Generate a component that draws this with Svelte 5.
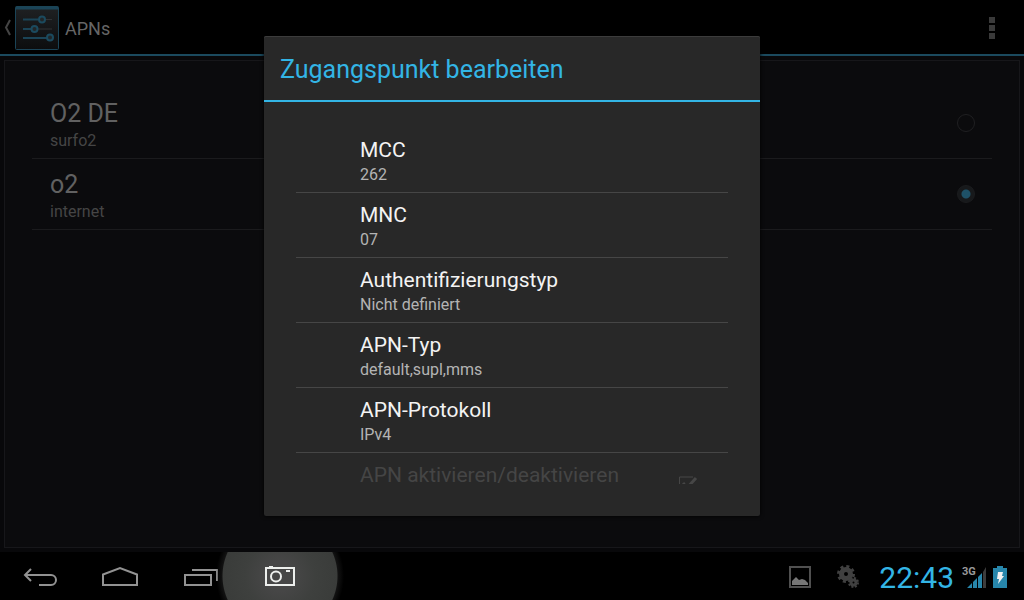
<script>
  const networks = [
    { name: 'O2 DE', apn: 'surfo2' },
    { name: 'o2', apn: 'internet' },
  ];
  let selected = $state('internet');

  const settings = [
    { label: 'MCC', value: '262' },
    { label: 'MNC', value: '07' },
    { label: 'Authentifizierungstyp', value: 'Nicht definiert' },
    { label: 'APN-Typ', value: 'default,supl,mms' },
    { label: 'APN-Protokoll', value: 'IPv4' },
  ];
</script>

<div class="screen">
  <header class="actionbar">
    <button class="up" aria-label="Zurück zu Einstellungen">
      <svg width="60" height="44" viewBox="0 0 60 44" fill="none">
        <defs>
          <linearGradient id="face" x1="0" y1="0" x2="0" y2="1">
            <stop offset="0" stop-color="#1f2123" />
            <stop offset="1" stop-color="#0c0d0e" />
          </linearGradient>
        </defs>
        <path d="M10 14 6 21.500 10 29" stroke="#444" stroke-width="2" />
        <rect x="15.500" y=".500" width="43" height="43" rx="1" fill="url(#face)" stroke="#1b4457" />
        <path d="M16 2h42" stroke="#1b4457" stroke-width="3" />
        <path d="M45 13.500h7M38 23h14" stroke="#303234" />
        <path d="M23 13.500h15M23 23h8M23 32h24" stroke="#1b4457" stroke-width="2" />
        <g stroke="#1b4a5e" stroke-width="2" fill="#222628">
          <circle cx="42" cy="13.500" r="3" />
          <circle cx="34.500" cy="23" r="3" />
          <circle cx="50" cy="31.500" r="3" />
        </g>
      </svg>
    </button>
    <h1>APNs</h1>
    <button class="overflow" aria-label="Weitere Optionen">
      <svg width="6" height="22" viewBox="0 0 6 22" fill="#3a3a3a">
        <path d="M0 0h6v6H0zM0 8h6v6H0zM0 16h6v6H0z" />
      </svg>
    </button>
  </header>

  <main>
    <div class="panel">
      {#each networks as network}
        <label class="network">
          <span class="texts">
            <span class="name">{network.name}</span>
            <span class="apn">{network.apn}</span>
          </span>
          <input type="radio" name="apn" value={network.apn} bind:group={selected} />
        </label>
      {/each}
    </div>
  </main>

  <nav>
    <button class="key" aria-label="Zurück">
      <svg width="36" height="24" viewBox="0 0 36 24" fill="none" stroke="#929292" stroke-width="2">
        <path d="M9 5 3 11l6 6M3 11h26a5 5 0 0 1 0 10H17" />
      </svg>
    </button>
    <button class="key" aria-label="Startseite">
      <svg width="38" height="24" viewBox="0 0 38 24" fill="none" stroke="#929292" stroke-width="2">
        <path d="M2 21V10.500L19 4l17 6.500V21z" />
      </svg>
    </button>
    <button class="key" aria-label="Letzte Apps">
      <svg width="38" height="24" viewBox="0 0 38 24" fill="none" stroke="#929292" stroke-width="2">
        <path d="M4 11h26v10H4zM11 6h25v11" />
      </svg>
    </button>
    <button class="key pressed" aria-label="Screenshot aufnehmen">
      <svg width="30" height="20" viewBox="0 0 30 20" fill="none" stroke="#eceeec" stroke-width="2">
        <path d="M1 2h28v17H1zM4 .500h4M21 5h4" />
        <circle cx="11" cy="10.500" r="5" />
      </svg>
    </button>
    <div class="status">
      <svg class="picture" width="22" height="22" viewBox="0 0 22 22">
        <path d="M1 1h20v20H1z" fill="none" stroke="#505050" stroke-width="2" />
        <path d="M3 19v-4l4-4 3 3 3-1 3 1 3 3v2z" fill="#777" />
      </svg>
      <svg class="gears" width="22" height="24" viewBox="0 0 22 24" fill="none" stroke="#404040">
        <circle cx="9" cy="9" r="4.500" stroke-width="5" />
        <circle cx="9" cy="9" r="7.500" stroke-width="3" stroke-dasharray="3 2.900" />
        <circle cx="16.500" cy="17.500" r="2.500" stroke-width="3" />
        <circle cx="16.500" cy="17.500" r="4.500" stroke-width="2" stroke-dasharray="2 1.530" />
      </svg>
      <time>22:43</time>
      <span class="signal">
        <span class="tech">3G</span>
        <svg width="20" height="22" viewBox="0 0 20 22">
          <path d="M0 22 5 17v5z M6 16l4-4v10H6z M11 11l4-4v15h-4z" fill="#2786ab" />
          <path d="M16 6l3-5v21h-3z" fill="#3c3c3c" />
        </svg>
      </span>
      <svg class="battery" width="14" height="22" viewBox="0 0 14 22">
        <path d="M4 0h6v2h4v20H0V2h4z" fill="#2786ab" />
        <path d="M5 6h5L9 10h2L5 18l1-5H4z" fill="#f2f2f2" />
      </svg>
    </div>
  </nav>

  <div class="scrim">
    <section class="dialog" role="dialog" aria-labelledby="dialog-title">
      <h2 id="dialog-title">Zugangspunkt bearbeiten</h2>
      <div class="body">
        <div class="list">
          {#each settings as setting}
            <button class="setting">
              <span class="label">{setting.label}</span>
              <span class="value">{setting.value}</span>
            </button>
          {/each}
          <label class="setting toggle">
            <span class="label">APN aktivieren/deaktivieren</span>
            <input type="checkbox" checked disabled />
            <svg width="20" height="18" viewBox="0 0 20 18" fill="none" stroke="#464646">
              <path d="M15 1H1.500v15H16V9" />
              <path d="m5 7 4 5 9-10" stroke-width="3" />
            </svg>
          </label>
        </div>
      </div>
    </section>
  </div>
</div>

<style>
  :global(body) {
    margin: 0;
    background: #000;
  }
  .screen {
    position: relative;
    display: flex;
    flex-direction: column;
    min-height: 100vh;
    background: #000;
    font-family: Roboto, 'Noto Sans', sans-serif;
    color: #fff;
  }
  button {
    margin: 0;
    padding: 0;
    border: 0;
    background: none;
    color: inherit;
    font: inherit;
    text-align: left;
  }
  svg {
    display: block;
    flex: none;
  }
  h1,
  h2 {
    margin: 0;
    font-weight: 400;
  }

  .actionbar {
    box-sizing: border-box;
    display: flex;
    align-items: center;
    gap: 5px;
    height: 56px;
    padding: 2px 29px 0 0;
    border-bottom: 2px solid #1b4a5e;
  }
  h1 {
    flex: 1;
    padding-top: 2px;
    font-size: 18px;
    line-height: 24px;
    color: #666;
  }

  main {
    flex: 1;
    display: flex;
    padding: 4px;
    background: #08080a;
  }
  .panel {
    flex: 1;
    padding: 27px 27px 0;
    border: 1px solid #17171a;
    background: #0b0b0d;
  }
  .network {
    display: flex;
    align-items: center;
    justify-content: space-between;
    height: 70px;
    padding: 0 17px 0 18px;
    border-bottom: 1px solid #1b1b1d;
  }
  .texts,
  .setting {
    display: flex;
    flex-direction: column;
    justify-content: center;
  }
  .texts {
    padding-top: 6px;
  }
  .name {
    font-size: 25px;
    line-height: 30px;
    color: #616161;
  }
  .apn {
    font-size: 16px;
    line-height: 24px;
    color: #454545;
  }
  input {
    appearance: none;
    margin: 0;
  }
  .network input {
    width: 18px;
    height: 18px;
    border: 1px solid #1f1f21;
    border-radius: 50%;
  }
  .network input:checked {
    border-color: #1b1c1e;
    background: radial-gradient(circle, #1e5167 4px, #17191b 5px);
  }

  nav {
    display: flex;
    align-items: center;
    height: 48px;
    overflow: hidden;
  }
  .key {
    display: flex;
    align-items: center;
    justify-content: center;
    width: 80px;
    height: 48px;
  }
  .pressed {
    width: 130px;
    margin-left: -25px;
    background: radial-gradient(circle, #464646 15px, #3e403e 35px, #3a3c3a 57px, #121212 58px, transparent 64px);
  }
  .status {
    display: flex;
    align-items: center;
    margin-left: auto;
    padding: 2px 17px 0 0;
  }
  .gears {
    margin: 0 20px 0 26px;
  }
  time {
    padding-top: 2px;
    font-size: 30px;
    line-height: 46px;
    color: #33b5e5;
  }
  .signal {
    position: relative;
    display: flex;
    margin: 0 6px 0 13px;
  }
  .tech {
    position: absolute;
    top: 1px;
    left: -5px;
    font-size: 11px;
    font-weight: 700;
    line-height: 10px;
    color: #999;
  }

  .scrim {
    position: absolute;
    inset: 0 0 48px;
    display: flex;
    align-items: center;
    justify-content: center;
    padding: 36px 16px;
  }
  .dialog {
    box-sizing: border-box;
    display: flex;
    flex-direction: column;
    width: 100%;
    max-width: 496px;
    height: 100%;
    border-radius: 2px;
    background: #282828;
    box-shadow: inset 0 1px #3c3c3c, 0 0 4px #000;
  }
  h2 {
    padding: 4px 16px 0;
    border-bottom: 2px solid #33b5e5;
    font-size: 25px;
    line-height: 60px;
    color: #33b5e5;
  }
  .body {
    flex: 1;
    display: flex;
    min-height: 0;
    padding: 26px 32px 32px;
  }
  .list {
    flex: 1;
    overflow: hidden;
  }
  .setting {
    box-sizing: border-box;
    width: 100%;
    height: 65px;
    padding: 4px 30px 0 64px;
    border-bottom: 1px solid #464646;
  }
  .label {
    font-size: 21px;
    line-height: 26px;
    color: #f3f3f3;
  }
  .value {
    font-size: 16px;
    line-height: 24px;
    color: #b4b4b4;
  }
  .toggle {
    flex-direction: row;
    align-items: flex-start;
    justify-content: space-between;
    padding-top: 9px;
  }
  .toggle .label {
    color: #454545;
  }
  .toggle input {
    width: 0;
    height: 0;
  }
  .toggle svg {
    margin-top: 14px;
  }
</style>
